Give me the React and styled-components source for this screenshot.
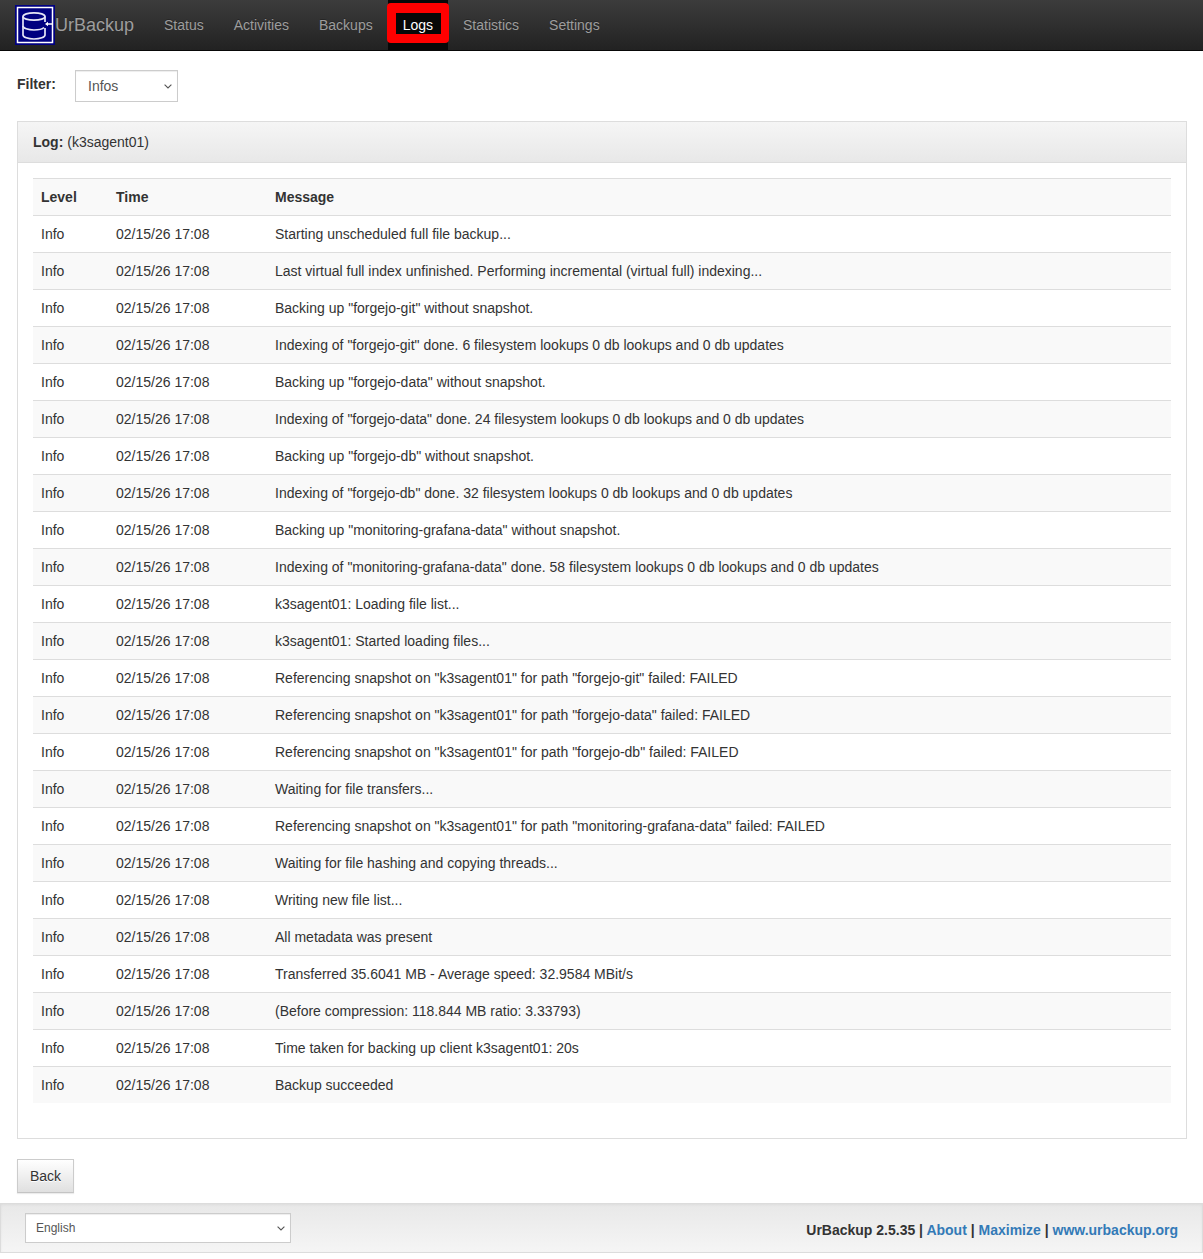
import React from "react";
import styled, { createGlobalStyle } from "styled-components";

const Global = createGlobalStyle`
  html, body { margin: 0; padding: 0; background: #fff; }
  body {
    font-family: "Liberation Sans", Arial, Helvetica, sans-serif;
    font-size: 14px;
    line-height: 20px;
    color: #333;
  }
  * { box-sizing: border-box; }
`;

const Page = styled.div`
  min-height: 1259px;
`;

const Navbar = styled.nav`
  display: flex;
  align-items: stretch;
  height: 51px;
  padding-left: 15px;
  background-image: linear-gradient(to bottom, #3c3c3c 0, #222 100%);
  border-bottom: 1px solid #080808;
`;

const Brand = styled.a`
  display: flex;
  align-items: center;
  font-size: 18px;
  color: #9d9d9d;
  text-shadow: 0 -1px 0 rgba(0, 0, 0, 0.25);
  height: 50px;
`;

const Logo = styled.svg`
  display: block;
  width: 40px;
  height: 40px;
`;

const NavList = styled.ul`
  display: flex;
  list-style: none;
  margin: 0;
  padding: 0 0 0 15px;
`;

const NavItem = styled.li`
  position: relative;
  height: 50px;
  padding: 15px;
  color: ${(p) => (p.$active ? "#fff" : "#9d9d9d")};
  background: ${(p) => (p.$active ? "#080808" : "transparent")};
  text-shadow: 0 -1px 0 rgba(0, 0, 0, 0.25);
  &::after {
    content: ${(p) => (p.$active ? '""' : "none")};
    position: absolute;
    left: -1px;
    right: -1px;
    top: 3px;
    bottom: 7px;
    border-style: solid;
    border-color: #f00;
    border-width: 10px 8px 9px 9px;
    border-radius: 4px;
  }
`;

const Main = styled.main`
  padding: 19px 16px 0 17px;
`;

const FilterRow = styled.div`
  display: flex;
  align-items: flex-start;
  height: 51px;
`;

const FilterLabel = styled.label`
  font-weight: 700;
  width: 58px;
  line-height: 28px;
`;

const SelectWrap = styled.div`
  position: relative;
  width: ${(p) => p.$width}px;
  height: ${(p) => p.$height}px;
`;

const Select = styled.select`
  display: block;
  width: 100%;
  height: 100%;
  padding: 0 ${(p) => p.$pad}px;
  appearance: none;
  font-family: inherit;
  font-size: ${(p) => p.$size}px;
  color: #555;
  background: #fff;
  border: 1px solid #ccc;
  border-radius: 0;
  box-shadow: inset 0 1px 1px rgba(0, 0, 0, 0.075);
`;

const Chevron = styled.svg`
  position: absolute;
  right: ${(p) => p.$right}px;
  top: 50%;
  width: 8px;
  height: 5px;
  margin-top: -2px;
  pointer-events: none;
`;

const Panel = styled.section`
  border: 1px solid #ddd;
  background: #fff;
`;

const PanelHeading = styled.header`
  height: 41px;
  padding: 10px 15px;
  background-image: linear-gradient(to bottom, #f5f5f5 0, #e8e8e8 100%);
  border-bottom: 1px solid #ddd;
`;

const PanelBody = styled.div`
  padding: 15px 15px 35px;
`;

const Table = styled.table`
  width: 100%;
  table-layout: fixed;
  border-collapse: collapse;
  border-spacing: 0;
`;

const Row = styled.tr`
  background: ${(p) => (p.$striped ? "#f9f9f9" : "#fff")};
`;

const Head = styled.th`
  width: ${(p) => p.$width || "auto"};
  padding: 8px;
  text-align: left;
  font-weight: 700;
  line-height: 20px;
  border-top: 1px solid #ddd;
  border-bottom: 1px solid #ddd;
`;

const Cell = styled.td`
  padding: 8px;
  line-height: 20px;
  border-top: ${(p) => (p.$first ? "0" : "1px solid #ddd")};
  white-space: nowrap;
`;

const BackButton = styled.button`
  display: block;
  margin-top: 20px;
  width: 57px;
  height: 34px;
  padding: 0;
  font-family: inherit;
  font-size: 14px;
  color: #333;
  background-image: linear-gradient(to bottom, #fff 0, #e0e0e0 100%);
  border: 1px solid #ccc;
  border-bottom-color: #c4c4c4;
  border-radius: 0;
  text-shadow: 0 1px 0 #fff;
  box-shadow: inset 0 1px 0 rgba(255, 255, 255, 0.15), 0 1px 1px rgba(0, 0, 0, 0.075);
`;

const Footer = styled.footer`
  display: flex;
  align-items: center;
  justify-content: space-between;
  margin-top: 10px;
  height: 50px;
  padding: 0 24px 0 24px;
  background-image: linear-gradient(to bottom, #e8e8e8 0, #f5f5f5 100%);
  border: 1px solid #dcdcdc;
  box-shadow: inset 0 1px 3px rgba(0, 0, 0, 0.05), 0 1px 0 rgba(255, 255, 255, 0.1);
`;

const FooterText = styled.div`
  font-weight: 700;
  padding-top: 4px;
`;

const FooterLink = styled.a`
  color: #337ab7;
  text-decoration: none;
`;

const Spacer = styled.span`
  white-space: pre;
`;

const NAV = ["Status", "Activities", "Backups", "Logs", "Statistics", "Settings"];

const MESSAGES = [
  "Starting unscheduled full file backup...",
  "Last virtual full index unfinished. Performing incremental (virtual full) indexing...",
  'Backing up "forgejo-git" without snapshot.',
  'Indexing of "forgejo-git" done. 6 filesystem lookups 0 db lookups and 0 db updates',
  'Backing up "forgejo-data" without snapshot.',
  'Indexing of "forgejo-data" done. 24 filesystem lookups 0 db lookups and 0 db updates',
  'Backing up "forgejo-db" without snapshot.',
  'Indexing of "forgejo-db" done. 32 filesystem lookups 0 db lookups and 0 db updates',
  'Backing up "monitoring-grafana-data" without snapshot.',
  'Indexing of "monitoring-grafana-data" done. 58 filesystem lookups 0 db lookups and 0 db updates',
  "k3sagent01: Loading file list...",
  "k3sagent01: Started loading files...",
  'Referencing snapshot on "k3sagent01" for path "forgejo-git" failed: FAILED',
  'Referencing snapshot on "k3sagent01" for path "forgejo-data" failed: FAILED',
  'Referencing snapshot on "k3sagent01" for path "forgejo-db" failed: FAILED',
  "Waiting for file transfers...",
  'Referencing snapshot on "k3sagent01" for path "monitoring-grafana-data" failed: FAILED',
  "Waiting for file hashing and copying threads...",
  "Writing new file list...",
  "All metadata was present",
  "Transferred 35.6041 MB - Average speed: 32.9584 MBit/s",
  "(Before compression: 118.844 MB ratio: 3.33793)",
  "Time taken for backing up client k3sagent01: 20s",
  "Backup succeeded",
];

function UrLogo() {
  return (
    <Logo viewBox="0 0 40 40" aria-hidden="true">
      <rect x="0" y="0" width="40" height="40" fill="#000080" />
      <rect x="2.500" y="2.500" width="35" height="35" fill="none" stroke="#fff" strokeWidth="1.500" />
      <g fill="none" stroke="#e6e6f6" strokeWidth="1.700">
        <ellipse cx="19" cy="11.500" rx="11" ry="3.700" />
        <path d="M8 11.500V30c0 2.200 5 4 11 4s11-1.800 11-4v-7" />
        <path d="M8 21c0 2.200 5 4 11 4 4.500 0 8.500-1 10-2.500" />
        <path d="M30 11.500v5.500" />
      </g>
      <path d="M30 19l3-2.200v1.400h4.500v1.600H33v1.400z" fill="#fff" />
    </Logo>
  );
}

function PlainSelect({ width, height, pad, size, right, options }) {
  return (
    <SelectWrap $width={width} $height={height}>
      <Select $pad={pad} $size={size} defaultValue={options[0]}>
        {options.map((o) => (
          <option key={o}>{o}</option>
        ))}
      </Select>
      <Chevron $right={right} viewBox="0 0 8 5" aria-hidden="true">
        <path d="M.6.600 4 4l3.400-3.400" fill="none" stroke="#555" strokeWidth="1.100" />
      </Chevron>
    </SelectWrap>
  );
}

export default function App() {
  return (
    <Page>
      <Global />
      <Navbar>
        <Brand>
          <UrLogo />
          UrBackup
        </Brand>
        <NavList>
          {NAV.map((n) => (
            <NavItem key={n} $active={n === "Logs"}>
              {n}
            </NavItem>
          ))}
        </NavList>
      </Navbar>
      <Main>
        <FilterRow>
          <FilterLabel>Filter:</FilterLabel>
          <PlainSelect width={103} height={32} pad={12} size={14} right={6} options={["Infos", "Warnings", "Errors"]} />
        </FilterRow>
        <Panel>
          <PanelHeading>
            <strong>Log:</strong> (k3sagent01)
          </PanelHeading>
          <PanelBody>
            <Table>
              <thead>
                <Row $striped>
                  <Head $width="75px">Level</Head>
                  <Head $width="159px">Time</Head>
                  <Head>Message</Head>
                </Row>
              </thead>
              <tbody>
                {MESSAGES.map((m, i) => (
                  <Row key={i} $striped={i % 2 === 1}>
                    <Cell $first={i === 0}>Info</Cell>
                    <Cell $first={i === 0}>02/15/26 17:08</Cell>
                    <Cell $first={i === 0}>{m}</Cell>
                  </Row>
                ))}
              </tbody>
            </Table>
          </PanelBody>
        </Panel>
        <BackButton>Back</BackButton>
      </Main>
      <Footer>
        <PlainSelect width={266} height={30} pad={10} size={12} right={6} options={["English", "Deutsch"]} />
        <FooterText>
          UrBackup 2.5.35 <Spacer>| </Spacer>
          <FooterLink href="#about">About</FooterLink> <Spacer>| </Spacer>
          <FooterLink href="#max">Maximize</FooterLink> <Spacer>| </Spacer>
          <FooterLink href="#site">www.urbackup.org</FooterLink>
        </FooterText>
      </Footer>
    </Page>
  );
}
